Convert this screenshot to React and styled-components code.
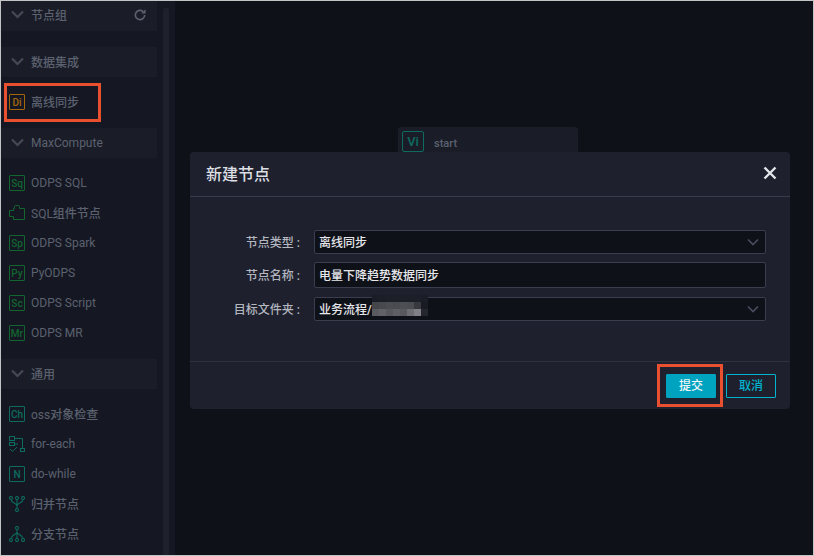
import React from 'react';
import styled, { createGlobalStyle } from 'styled-components';

const Global = createGlobalStyle`
  html, body { margin: 0; padding: 0; background: #0f1118; }
  * { box-sizing: border-box; }
  #root { width: 814px; height: 556px; }
`;

const FONT = `"Roboto", "Noto Sans CJK SC", sans-serif`;

const Page = styled.div`
  position: relative;
  width: 814px;
  height: 556px;
  overflow: hidden;
  display: flex;
  background: #0f1118;
  border: 1px solid #c4c4c4;
  font-family: ${FONT};
`;

const Sidebar = styled.aside`
  width: 162px;
  flex: none;
  background: #151823;
  display: flex;
  flex-direction: column;
`;

const Section = styled.div`
  height: 30px;
  width: 156px;
  flex: none;
  background: #1a1d28;
  display: flex;
  align-items: center;
  padding: 0 10px 0 10px;
  padding-bottom: ${(p) => (p.$lift ? 2 : 0)}px;
  color: #5c616f;
  font-size: 12px;
  margin-top: ${(p) => p.$top || 0}px;
  margin-bottom: ${(p) => p.$bottom || 0}px;
`;

const Chevron = styled.svg`
  width: 13px;
  height: 9px;
  margin-right: 7px;
  margin-bottom: 2px;
  flex: none;
`;

const SectionTitle = styled.span`
  flex: 1;
  padding-bottom: ${(p) => (p.$cjk ? 2 : 0)}px;
  font-weight: ${(p) => (p.$cjk ? 500 : 400)};
`;

const Item = styled.div`
  height: 30px;
  flex: none;
  display: flex;
  align-items: center;
  padding-left: 8px;
  color: #5c616f;
  font-size: 12px;
  gap: 6px;
`;

const Txt = styled.span`
  padding-bottom: 2px;
`;

const Han = styled.span`
  font-weight: 500;
`;

const Badge = styled.span`
  width: 16px;
  height: 16px;
  flex: none;
  border: 1px solid ${(p) => p.$color};
  border-radius: 1px;
  color: ${(p) => p.$color};
  font-size: 10px;
  font-weight: 500;
  display: flex;
  align-items: center;
  justify-content: center;
  font-family: "Roboto", sans-serif;
`;

const IconBox = styled.svg`
  width: 16px;
  height: 16px;
  flex: none;
`;

const ScrollTrack = styled.div`
  width: 6px;
  flex: none;
  background: #151823;
  padding-top: 7px;
  display: flex;
`;

const ScrollThumb = styled.div`
  flex: 1;
  background: #1e212c;
  border-radius: 2px 2px 0 0;
`;

const Gutter = styled.div`
  width: 6px;
  flex: none;
  background: #151823;
`;

const Canvas = styled.main`
  flex: 1;
  background: #0f1118;
`;

const NodeCard = styled.div`
  position: absolute;
  left: 397px;
  top: 126px;
  width: 180px;
  height: 30px;
  border-radius: 3px;
  background: #1a1d28;
  display: flex;
  align-items: center;
  padding: 0 0 1px 4px;
  gap: 10px;
  color: #5c616f;
  font-size: 11px;
  font-weight: 500;
`;

const NodeBadge = styled(Badge)`
  width: 22px;
  height: 21px;
  font-size: 13px;
  border-radius: 2px;
`;

const NodeName = styled.span`
  padding-top: 3px;
`;

const Modal = styled.section`
  position: absolute;
  left: 189px;
  top: 151px;
  width: 600px;
  height: 257px;
  background: #1e212d;
  border-radius: 4px;
  display: flex;
  flex-direction: column;
`;

const ModalHeader = styled.header`
  height: 45px;
  flex: none;
  display: flex;
  align-items: center;
  justify-content: space-between;
  padding: 0 13px 0 16px;
  border-bottom: 1px solid #383b4b;
  color: #dcdee4;
  font-size: 16px;
  font-weight: 500;
`;

const CloseIcon = styled.svg`
  width: 14px;
  height: 14px;
  margin-bottom: 2px;
`;

const ModalBody = styled.div`
  flex: 1;
  padding: 33px 24px 0 0;
  display: flex;
  flex-direction: column;
`;

const Row = styled.div`
  display: flex;
  align-items: center;
  margin-bottom: ${(p) => p.$gap}px;
`;

const Label = styled.label`
  width: 110px;
  margin-right: 14px;
  padding-bottom: 2px;
  flex: none;
  text-align: right;
  color: #b4b7c0;
  font-size: 12px;
  font-weight: 500;
  white-space: nowrap;
`;

const Field = styled.div`
  flex: 1;
  height: ${(p) => p.$h}px;
  background: #0f1118;
  border: 1px solid #3a3d4d;
  border-radius: 2px;
  display: flex;
  align-items: center;
  justify-content: space-between;
  padding: 0 6px 0 4px;
  color: #e6e7ea;
  font-size: 12px;
  font-weight: 500;
`;

const FieldValue = styled.span`
  padding-bottom: 2px;
`;

const Mosaic = styled.svg`
  position: absolute;
  left: 182px;
  top: 143px;
  width: 60px;
  height: 21px;
`;

const Caret = styled.svg`
  width: 12px;
  height: 8px;
`;

const ModalFooter = styled.footer`
  height: 48px;
  flex: none;
  border-top: 1px solid #2e3140;
  display: flex;
  align-items: center;
  justify-content: flex-end;
  gap: 10px;
  padding: 0 14px 0 0;
`;

const Button = styled.button`
  width: 50px;
  height: 24px;
  padding: 0 0 2px;
  border-radius: 1px;
  font-family: ${FONT};
  font-size: 12px;
  font-weight: 500;
  background: ${(p) => (p.$primary ? '#00a3bf' : 'transparent')};
  color: ${(p) => (p.$primary ? '#f2f6f8' : '#00b4d0')};
  border: 1px solid ${(p) => (p.$primary ? '#00a3bf' : '#00b4d0')};
`;

const Callout = styled.div`
  position: absolute;
  border: 3px solid #e9502f;
  left: ${(p) => p.$x}px;
  top: ${(p) => p.$y}px;
  width: ${(p) => p.$w}px;
  height: ${(p) => p.$h}px;
`;

const ChevronIcon = () => (
  <Chevron viewBox="0 0 13 9">
    <path d="M1 1.5 L6.5 7 L12 1.5" fill="none" stroke="#454955" strokeWidth="2.2" />
  </Chevron>
);

const Refresh = styled.svg`
  width: 14px;
  height: 14px;
  flex: none;
`;

const GREEN = '#12652f';
const TEAL = '#0e6b5f';

const Puzzle = () => (
  <IconBox viewBox="0 0 16 16">
    <path d="M0.5 5.5H4.5V3.5H5.5V1.5Q5.5 0.5 6.5 0.5H9.5Q10.5 0.5 10.5 1.5V3.5H15.5V14.5H4.5V11.5H0.5Z" fill="none" stroke={GREEN} strokeWidth="1" />
  </IconBox>
);

const Flow = () => (
  <IconBox viewBox="0 0 16 16">
    <g fill="none" stroke={TEAL} strokeWidth="1">
      <rect x="0.5" y="0.5" width="5" height="4" />
      <rect x="0.5" y="6.5" width="5" height="3" />
      <rect x="11.5" y="12.5" width="4" height="3" />
      <path d="M5.5 2.5H13.5V12.5M5.5 8H9" />
      <path d="M1 13l2.5 2.5L8 11" />
    </g>
  </IconBox>
);

const Merge = () => (
  <IconBox viewBox="0 0 16 16">
    <g fill="none" stroke={TEAL} strokeWidth="1.1">
      <circle cx="2" cy="2" r="1.5" />
      <circle cx="8" cy="2" r="1.5" />
      <circle cx="14" cy="2" r="1.5" />
      <circle cx="8" cy="14" r="1.5" />
      <path d="M2 3.5C2 7 8 7 8 10V12.5M8 3.5V10M14 3.5C14 7 8 7 8 10" />
    </g>
  </IconBox>
);

const Branch = () => (
  <IconBox viewBox="0 0 16 16">
    <g fill="none" stroke={TEAL} strokeWidth="1.1">
      <circle cx="8" cy="2" r="1.5" />
      <circle cx="2" cy="14" r="1.5" />
      <circle cx="8" cy="14" r="1.5" />
      <circle cx="14" cy="14" r="1.5" />
      <path d="M8 3.5V12.5M8 6.5C6 9 2.5 9.5 2 12.5M8 6.5C10 9 13.5 9.5 14 12.5" />
    </g>
  </IconBox>
);

const mosaicRows = [
  ['#1a1c26', '#1b1d27', '#1c1e28', '#1c1e28', '#1c1e28', '#1c1e28', '#1c1e28', '#1a1c26'],
  ['#45464c', '#48494f', '#4c4d53', '#4a4b51', '#4e4f55', '#4c4d53', '#38393f', '#191b24'],
  ['#5a5b61', '#616268', '#56575d', '#5e5f65', '#58595f', '#6d6e73', '#7f8085', '#24252d'],
];

export default function App() {
  return (
    <Page>
      <Global />
      <Sidebar>
        <Section $lift $bottom={16}>
          <ChevronIcon />
          <SectionTitle $cjk>节点组</SectionTitle>
          <Refresh viewBox="0 0 24 24">
            <path d="M20 12a8 8 0 1 1-2.6-5.9" fill="none" stroke="#5c616f" strokeWidth="2.8" />
            <path d="M21.5 2v7.5h-7.5z" fill="#5c616f" />
          </Refresh>
        </Section>
        <Section $bottom={10}>
          <ChevronIcon />
          <SectionTitle $cjk>数据集成</SectionTitle>
        </Section>
        <Item><Badge $color="#a3660c">Di</Badge><Txt><Han>离线同步</Han></Txt></Item>
        <Section $top={11} $bottom={10}>
          <ChevronIcon />
          <SectionTitle>MaxCompute</SectionTitle>
        </Section>
        <Item><Badge $color={GREEN}>Sq</Badge>ODPS SQL</Item>
        <Item><Puzzle /><Txt>SQL<Han>组件节点</Han></Txt></Item>
        <Item><Badge $color={GREEN}>Sp</Badge>ODPS Spark</Item>
        <Item><Badge $color={GREEN}>Py</Badge>PyODPS</Item>
        <Item><Badge $color={GREEN}>Sc</Badge>ODPS Script</Item>
        <Item><Badge $color={GREEN}>Mr</Badge>ODPS MR</Item>
        <Section $top={11} $bottom={10}>
          <ChevronIcon />
          <SectionTitle $cjk>通用</SectionTitle>
        </Section>
        <Item><Badge $color={TEAL}>Ch</Badge><Txt>oss<Han>对象检查</Han></Txt></Item>
        <Item><Flow />for-each</Item>
        <Item><Badge $color={TEAL}>N</Badge>do-while</Item>
        <Item><Merge /><Txt><Han>归并节点</Han></Txt></Item>
        <Item><Branch /><Txt><Han>分支节点</Han></Txt></Item>
      </Sidebar>
      <ScrollTrack><ScrollThumb /></ScrollTrack>
      <Gutter />
      <Canvas />
      <NodeCard>
        <NodeBadge $color={TEAL}>Vi</NodeBadge>
        <NodeName>start</NodeName>
      </NodeCard>
      <Modal>
        <ModalHeader>
          <Txt>新建节点</Txt>
          <CloseIcon viewBox="0 0 14 14">
            <path d="M1.5 1.5 L12.5 12.5 M12.5 1.5 L1.5 12.5" stroke="#e4e6ea" strokeWidth="2.4" />
          </CloseIcon>
        </ModalHeader>
        <ModalBody>
          <Row $gap={8}>
            <Label>节点类型 :</Label>
            <Field $h={24}>
              <FieldValue>离线同步</FieldValue>
              <Caret viewBox="0 0 12 8"><path d="M1 1.5 L6 6.5 L11 1.5" fill="none" stroke="#4a4d5e" strokeWidth="1.6" /></Caret>
            </Field>
          </Row>
          <Row $gap={9}>
            <Label>节点名称 :</Label>
            <Field $h={26}><FieldValue>电量下降趋势数据同步</FieldValue></Field>
          </Row>
          <Row $gap={0}>
            <Label>目标文件夹 :</Label>
            <Field $h={24}>
              <FieldValue>业务流程/</FieldValue>
              <Caret viewBox="0 0 12 8"><path d="M1 1.5 L6 6.5 L11 1.5" fill="none" stroke="#4a4d5e" strokeWidth="1.6" /></Caret>
            </Field>
          </Row>
          <Mosaic viewBox="0 0 60 21">
            {mosaicRows.map((row, r) =>
              row.map((c, i) => (
                <rect key={`${r}-${i}`} x={i * 7} y={r * 7} width="7" height="7" fill={c} />
              ))
            )}
          </Mosaic>
        </ModalBody>
        <ModalFooter>
          <Button $primary>提交</Button>
          <Button>取消</Button>
        </ModalFooter>
      </Modal>
      <Callout $x={3} $y={82} $w={97} $h={39} />
      <Callout $x={656} $y={363} $w={66} $h={43} />
    </Page>
  );
}
